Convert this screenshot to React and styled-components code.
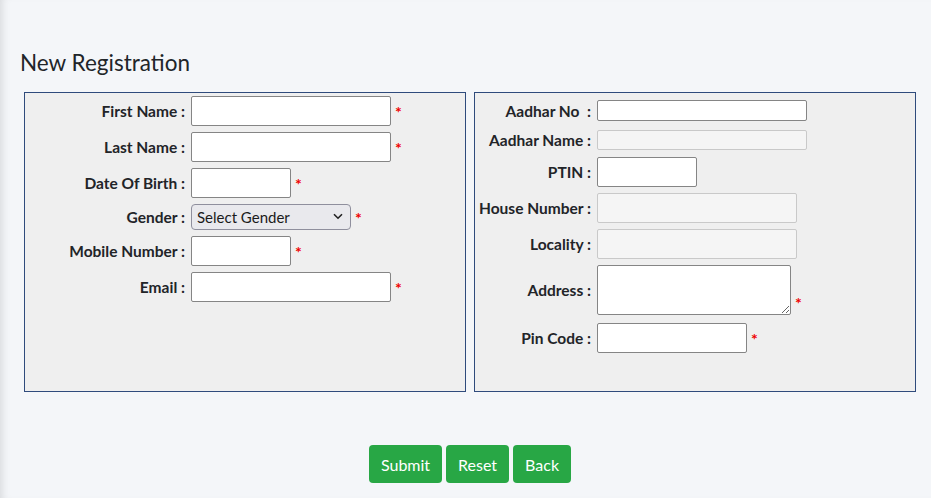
import React from "react";
import styled, { createGlobalStyle } from "styled-components";

const GlobalStyle = createGlobalStyle`
  html, body {
    margin: 0;
    padding: 0;
    background: #f4f6f9;
    font-family: "Lato", "Noto Sans", sans-serif;
    color: #212529;
  }
`;

const Page = styled.div`
  min-height: 498px;
  padding: 0 15px 0 24px;
  box-sizing: border-box;
  box-shadow: inset 8px 0 8px -6px rgba(0, 0, 0, 0.12);
`;

const Title = styled.h3`
  margin: 0;
  padding: 50px 0 16px 0;
  margin-left: -4px;
  font-size: 22.5px;
  font-weight: 400;
  line-height: 26px;
  color: #212529;
`;

const Panels = styled.div`
  display: grid;
  grid-template-columns: 442px 442px;
  column-gap: 8px;
`;

const Panel = styled.div`
  height: 300px;
  box-sizing: border-box;
  border: 1px solid #2f4b7c;
  background: #efefef;
  padding-top: ${(p) => p.$pt}px;
  display: flex;
  flex-direction: column;
  gap: 6px;
`;

const Row = styled.div`
  display: flex;
  align-items: center;
  margin-top: ${(p) => p.$mt || 0}px;
`;

const Label = styled.label`
  width: ${(p) => p.$w}px;
  flex: none;
  text-align: right;
  padding-right: 6px;
  box-sizing: border-box;
  font-size: 15.5px;
  font-weight: 700;
  color: #222428;
  white-space: nowrap;
`;

const Input = styled.input`
  width: ${(p) => p.$w}px;
  height: ${(p) => p.$h || 30}px;
  box-sizing: border-box;
  border: 1px solid ${(p) => (p.disabled ? "#c9c9c9" : "#858585")};
  border-radius: 2px;
  background: ${(p) => (p.disabled ? "#f5f5f5" : "#ffffff")};
  padding: 2px 4px;
  font-size: 14px;
  font-family: inherit;
  margin: 0;
`;

const Area = styled.textarea`
  width: 194px;
  height: 50px;
  box-sizing: border-box;
  border: 1px solid #858585;
  border-radius: 2px;
  background: #fff;
  margin: 0;
  font-family: inherit;
`;

const SelectWrap = styled.div`
  position: relative;
  width: 160px;
  height: 26px;
`;

const Select = styled.select`
  appearance: none;
  width: 100%;
  height: 100%;
  box-sizing: border-box;
  border: 1px solid #8f8f9d;
  border-radius: 4px;
  background: #e9e9ed;
  padding: 0 24px 0 5px;
  font-family: "Lato", "Noto Sans", sans-serif;
  font-size: 15px;
  color: #1b1b1b;
`;

const Chevron = styled.svg`
  position: absolute;
  right: 8px;
  top: 9px;
  pointer-events: none;
`;

const Star = styled.span`
  color: #f00000;
  font-size: 16px;
  font-weight: 700;
  margin-left: 4px;
  align-self: ${(p) => (p.$bottom ? "flex-end" : "center")};
  position: relative;
  top: ${(p) => (p.$bottom ? -3 : 0)}px;
`;

const Actions = styled.div`
  display: flex;
  justify-content: center;
  gap: 4px;
  margin-top: 53px;
`;

const Button = styled.button`
  height: 38px;
  padding: 0 12px;
  border: none;
  border-radius: 4px;
  background: #28a745;
  color: #fff;
  font-family: "Lato", "Noto Sans", sans-serif;
  font-size: 16px;
  cursor: pointer;
`;

const leftFields = [
  { label: "First Name :", w: 200 },
  { label: "Last Name :", w: 200 },
  { label: "Date Of Birth :", w: 100 },
  { label: "Gender :", select: true },
  { label: "Mobile Number :", w: 100 },
  { label: "Email :", w: 200 },
];

export default function App() {
  return (
    <>
      <GlobalStyle />
      <Page>
        <Title>New Registration</Title>
        <Panels>
          <Panel $pt={3}>
            {leftFields.map((f) => (
              <Row key={f.label}>
                <Label $w={166}>{f.label}</Label>
                {f.select ? (
                  <SelectWrap>
                    <Select defaultValue="">
                      <option value="">Select Gender</option>
                      <option>Male</option>
                      <option>Female</option>
                    </Select>
                    <Chevron width="10" height="7" viewBox="0 0 10 7">
                      <path d="M1 1.2 L5 5.2 L9 1.2" fill="none" stroke="#222" strokeWidth="1.6" />
                    </Chevron>
                  </SelectWrap>
                ) : (
                  <Input $w={f.w} />
                )}
                <Star>*</Star>
              </Row>
            ))}
          </Panel>
          <Panel $pt={7}>
            <Row>
              <Label $w={122}>Aadhar No&nbsp; :</Label>
              <Input $w={210} $h={21} />
            </Row>
            <Row $mt={3}>
              <Label $w={122}>Aadhar Name :</Label>
              <Input $w={210} $h={20} disabled />
            </Row>
            <Row $mt={1}>
              <Label $w={122}>PTIN :</Label>
              <Input $w={100} />
            </Row>
            <Row>
              <Label $w={122}>House Number :</Label>
              <Input $w={200} disabled />
            </Row>
            <Row>
              <Label $w={122}>Locality :</Label>
              <Input $w={200} disabled />
            </Row>
            <Row>
              <Label $w={122}>Address :</Label>
              <Area />
              <Star $bottom>*</Star>
            </Row>
            <Row $mt={2}>
              <Label $w={122}>Pin Code :</Label>
              <Input $w={150} />
              <Star>*</Star>
            </Row>
          </Panel>
        </Panels>
        <Actions>
          <Button>Submit</Button>
          <Button>Reset</Button>
          <Button>Back</Button>
        </Actions>
      </Page>
    </>
  );
}
